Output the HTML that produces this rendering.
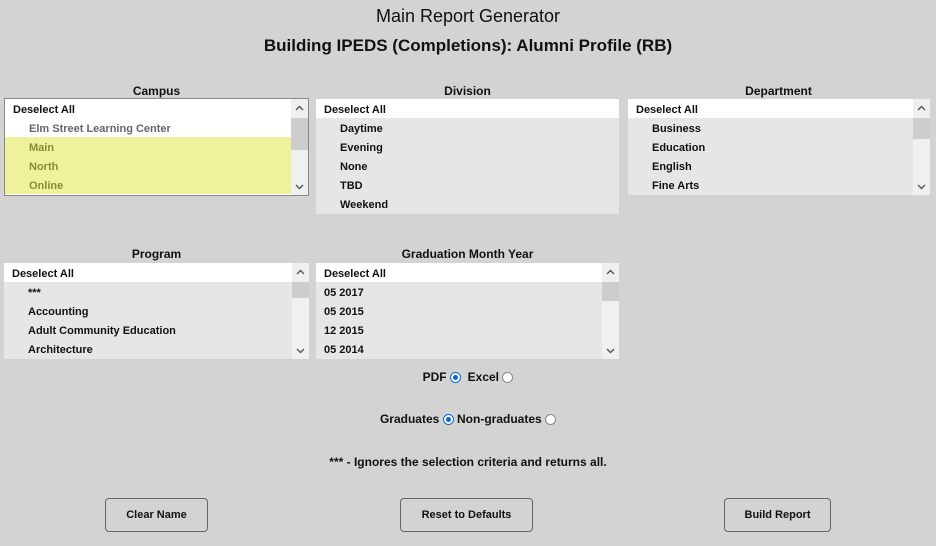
<!DOCTYPE html>
<html><head><meta charset="utf-8"><style>
*{margin:0;padding:0;box-sizing:border-box}
body{width:936px;height:546px;background:#d3d3d3;font-family:"Liberation Sans",sans-serif;color:#111;position:relative;overflow:hidden}
.a{position:absolute;white-space:nowrap}
.t1{top:6px;left:0;width:936px;text-align:center;font-size:18px}
.t2{top:36px;left:0;width:936px;text-align:center;font-size:17px;font-weight:bold}
.lbl{font-size:12px;font-weight:bold;text-align:center}
.box{position:absolute;background:#e6e6e6;overflow:hidden;font-size:11px;font-weight:bold}
.box.b{border:1px solid #888}
.row{height:19px;line-height:22px;padding-left:24px}
.row.h{background:#fff;padding-left:8px}
.sb{position:absolute;right:0;top:0;width:17px;bottom:0;background:#f0f0f0}
.th{position:absolute;left:0;width:17px;top:19px;background:#cdcdcd}
.ar{position:absolute;left:4px;width:9px;height:6px}
.btn{position:absolute;border:1px solid #666;border-radius:4px;background:#d3d3d3;font-size:11px;font-weight:bold;text-align:center;line-height:32px;height:34px}
.rad{display:inline-block;width:11px;height:11px;border-radius:50%;border:1px solid #888;background:#fff;vertical-align:-2px;position:relative}
.rad.on{border-color:#0a66d8}
.rad.on::after{content:"";position:absolute;left:2px;top:2px;width:5px;height:5px;border-radius:50%;background:#0a66d8}
.txt{font-size:12px;font-weight:bold}
</style></head><body>
<div class="a t1">Main Report Generator</div>
<div class="a t2">Building IPEDS (Completions): Alumni Profile (RB)</div>

<div class="a lbl" style="left:4px;width:305px;top:84px">Campus</div>
<div class="a lbl" style="left:316px;width:303px;top:84px">Division</div>
<div class="a lbl" style="left:627px;width:303px;top:84px">Department</div>
<div class="a lbl" style="left:4px;width:305px;top:247px">Program</div>
<div class="a lbl" style="left:316px;width:303px;top:247px">Graduation Month Year</div>

<div class="box b" style="left:4px;top:98px;width:305px;height:98px;background:#fff">
<div class="row h">Deselect All</div>
<div class="row" style="color:#666;background:#fff">Elm Street Learning Center</div>
<div class="row" style="color:#8a8a3a;background:#eff29c">Main</div>
<div class="row" style="color:#8a8a3a;background:#eff29c">North</div>
<div class="row" style="color:#8a8a3a;background:#eff29c">Online</div>
<div class="sb"><svg class="ar" style="top:6px" viewBox="0 0 9 6"><path d="M1 5L4.5 1.5L8 5" fill="none" stroke="#555" stroke-width="1.4"/></svg><div class="th" style="height:32px"></div><svg class="ar" style="bottom:5px" viewBox="0 0 9 6"><path d="M1 1L4.5 4.5L8 1" fill="none" stroke="#555" stroke-width="1.4"/></svg></div>
</div>

<div class="box" style="left:316px;top:99px;width:303px;height:115px">
<div class="row h">Deselect All</div>
<div class="row">Daytime</div><div class="row">Evening</div><div class="row">None</div><div class="row">TBD</div><div class="row">Weekend</div>
</div>

<div class="box" style="left:628px;top:99px;width:302px;height:96px">
<div class="row h">Deselect All</div>
<div class="row">Business</div><div class="row">Education</div><div class="row">English</div><div class="row">Fine Arts</div>
<div class="sb"><svg class="ar" style="top:6px" viewBox="0 0 9 6"><path d="M1 5L4.5 1.5L8 5" fill="none" stroke="#555" stroke-width="1.4"/></svg><div class="th" style="height:21px"></div><svg class="ar" style="bottom:5px" viewBox="0 0 9 6"><path d="M1 1L4.5 4.5L8 1" fill="none" stroke="#555" stroke-width="1.4"/></svg></div>
</div>

<div class="box" style="left:4px;top:263px;width:305px;height:96px">
<div class="row h">Deselect All</div>
<div class="row">***</div><div class="row">Accounting</div><div class="row">Adult Community Education</div><div class="row">Architecture</div>
<div class="sb"><svg class="ar" style="top:6px" viewBox="0 0 9 6"><path d="M1 5L4.5 1.5L8 5" fill="none" stroke="#555" stroke-width="1.4"/></svg><div class="th" style="height:16px"></div><svg class="ar" style="bottom:5px" viewBox="0 0 9 6"><path d="M1 1L4.5 4.5L8 1" fill="none" stroke="#555" stroke-width="1.4"/></svg></div>
</div>

<div class="box" style="left:316px;top:263px;width:303px;height:96px">
<div class="row h">Deselect All</div>
<div class="row" style="padding-left:8px">05 2017</div><div class="row" style="padding-left:8px">05 2015</div><div class="row" style="padding-left:8px">12 2015</div><div class="row" style="padding-left:8px">05 2014</div>
<div class="sb"><svg class="ar" style="top:6px" viewBox="0 0 9 6"><path d="M1 5L4.5 1.5L8 5" fill="none" stroke="#555" stroke-width="1.4"/></svg><div class="th" style="height:19px"></div><svg class="ar" style="bottom:5px" viewBox="0 0 9 6"><path d="M1 1L4.5 4.5L8 1" fill="none" stroke="#555" stroke-width="1.4"/></svg></div>
</div>

<div class="a txt" style="left:0;width:936px;text-align:center;top:370px">PDF <span class="rad on"></span> &nbsp;Excel <span class="rad"></span></div>
<div class="a txt" style="left:0;width:936px;text-align:center;top:412px">Graduates <span class="rad on"></span> Non-graduates <span class="rad"></span></div>
<div class="a txt" style="left:0;width:936px;text-align:center;top:455px">*** - Ignores the selection criteria and returns all.</div>

<div class="btn" style="left:105px;top:498px;width:103px">Clear Name</div>
<div class="btn" style="left:400px;top:498px;width:133px">Reset to Defaults</div>
<div class="btn" style="left:724px;top:498px;width:107px">Build Report</div>
</body></html>
